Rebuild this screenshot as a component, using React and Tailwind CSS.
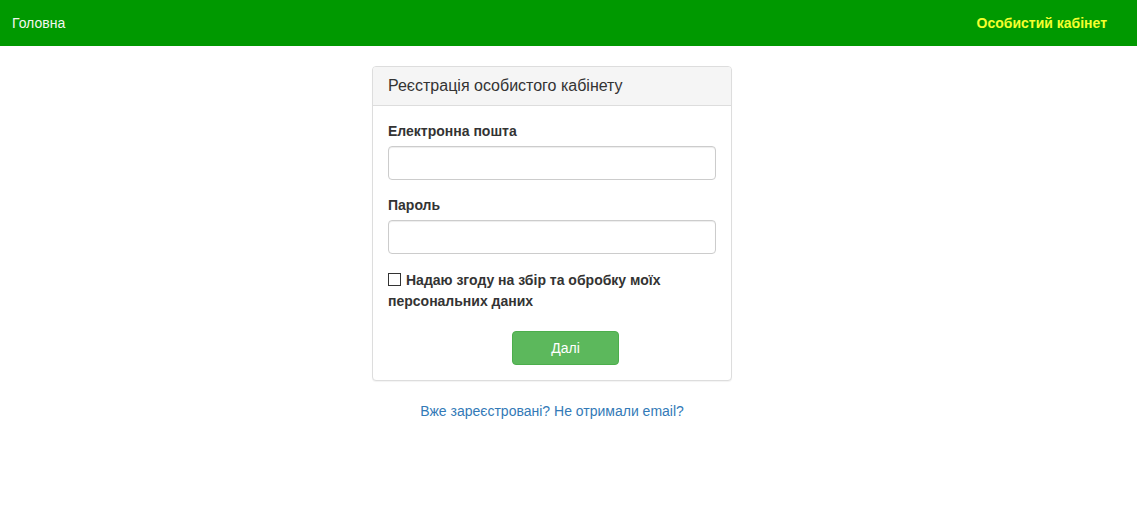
export default function App() {
  return (
    <div className="min-h-screen bg-white text-[14px] text-[#333] font-['Liberation_Sans',Arial,sans-serif]">
      <nav className="h-[46px] bg-[#009900] flex items-center justify-between pl-[12px] pr-[30px]">
        <a href="#" className="text-[14px] text-[#f2f7ee]">Головна</a>
        <a href="#" className="text-[14px] font-bold text-[#f4ff2e]">Особистий кабінет</a>
      </nav>
      <main className="ml-[372px] w-[360px] pt-[20px]">
        <div className="bg-white border border-[#ddd] rounded-[4px] shadow-[0_1px_1px_rgba(0,0,0,0.05)]">
          <div className="bg-[#f5f5f5] border-b border-[#ddd] rounded-t-[3px] px-[15px] py-[10px] text-[16px] leading-[18px] text-[#333]">
            Реєстрація особистого кабінету
          </div>
          <form className="p-[15px]">
            <div className="mb-[15px]">
              <label className="block font-bold leading-[20px] mb-[5px]">Електронна пошта</label>
              <input type="email" className="block w-full h-[34px] px-[12px] border border-[#ccc] rounded-[4px] shadow-[inset_0_1px_1px_rgba(0,0,0,0.075)] outline-none" />
            </div>
            <div className="mb-[15px]">
              <label className="block font-bold leading-[20px] mb-[5px]">Пароль</label>
              <input type="password" className="block w-full h-[34px] px-[12px] border border-[#ccc] rounded-[4px] shadow-[inset_0_1px_1px_rgba(0,0,0,0.075)] outline-none" />
            </div>
            <label className="block font-bold leading-[21px] mt-[16px]">
              <input type="checkbox" className="w-[13px] h-[13px] m-0 mr-[5px] align-[-1px] appearance-none border border-[#333] bg-white" />
              Надаю згоду на збір та обробку моїх персональних даних
            </label>
            <div className="flex mt-[19px] pl-[124px]">
              <button type="button" className="w-[107px] h-[34px] bg-[#5cb85c] border border-[#4cae4c] rounded-[4px] text-white text-[14px]">
                Далі
              </button>
            </div>
          </form>
        </div>
        <div className="text-center mt-[20px] leading-[20px]">
          <a href="#" className="text-[#337ab7]">Вже зареєстровані? Не отримали email?</a>
        </div>
      </main>
    </div>
  );
}
